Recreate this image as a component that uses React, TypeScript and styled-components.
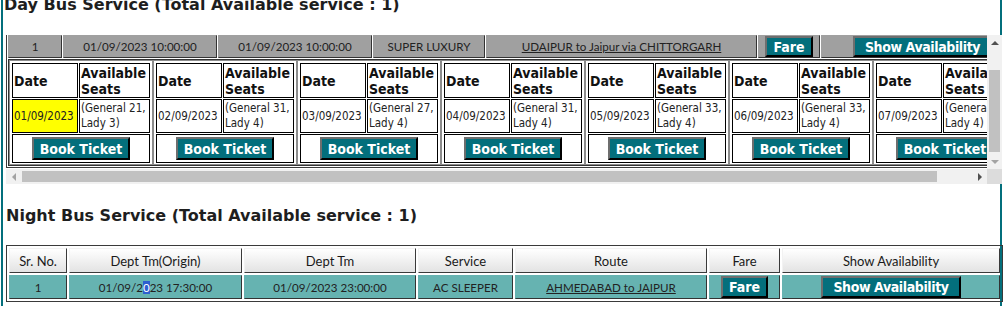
import React, { useLayoutEffect, useRef } from "react";
import styled, { createGlobalStyle, css } from "styled-components";

const teal = "#036f7c";
const bodyFont = `"Lato", "Liberation Sans", sans-serif`;
const boldFont = `"DejaVu Sans Condensed", "DejaVu Sans", Verdana, sans-serif`;

const GlobalStyle = createGlobalStyle`
  html, body {
    margin: 0;
    padding: 0;
    background: #fff;
    overflow: hidden;
  }
  body {
    font-family: ${bodyFont};
    color: #222;
  }
`;

const Page = styled.div`
  margin-left: 1px;
  width: 1001px;
  height: 311px;
  box-sizing: border-box;
  border-left: 2px solid ${teal};
  border-right: 2px solid ${teal};
  padding-left: 3px;
`;

const SectionTitle = styled.h2<{ $top: number; $shift?: number }>`
  margin: ${(p) => p.$top}px 0 0 ${(p) => p.$shift ?? 0}px;
  font: bold 16px/20px "DejaVu Sans", Verdana, sans-serif;
  color: #1e1e1e;
  white-space: nowrap;
`;

/* scroll area: viewport plus drawn classic scrollbars */
const ScrollFrame = styled.div`
  margin-top: 20px;
  width: 996px;
  height: 149px;
  display: grid;
  grid-template-columns: 981px 15px;
  grid-template-rows: 134px 15px;
`;

const Viewport = styled.div`
  overflow: hidden;
`;

const Track = styled.div<{ $vertical?: boolean }>`
  display: flex;
  flex-direction: ${(p) => (p.$vertical ? "column" : "row")};
  background: #f1f1f1;
`;

const TrackGutter = styled.div<{ $vertical?: boolean }>`
  flex: 1;
  display: flex;
  flex-direction: ${(p) => (p.$vertical ? "column" : "row")};
  padding: ${(p) => (p.$vertical ? "0 2px" : "2px 0")};
`;

const Thumb = styled.div<{ $start: number; $length: number; $vertical?: boolean }>`
  flex: none;
  background: #c1c1c1;
  ${(p) =>
    p.$vertical
      ? css`
          margin-top: ${p.$start}px;
          height: ${p.$length}px;
        `
      : css`
          margin-left: ${p.$start}px;
          width: ${p.$length}px;
        `}
`;

const Arrow = styled.div<{ $dir: "up" | "down" | "left" | "right"; $off?: boolean }>`
  flex: none;
  width: 15px;
  height: 15px;
  display: flex;
  align-items: center;
  justify-content: center;

  &::after {
    content: "";
    width: 0;
    height: 0;
    border: 4px solid transparent;
    ${(p) => {
      const c = p.$off ? "#a3a3a3" : "#505050";
      switch (p.$dir) {
        case "up":
          return css`
            border-top: 0;
            border-bottom: 4px solid ${c};
          `;
        case "down":
          return css`
            border-bottom: 0;
            border-top: 4px solid ${c};
          `;
        case "left":
          return css`
            border-left: 0;
            border-right: 4px solid ${c};
          `;
        default:
          return css`
            border-right: 0;
            border-left: 4px solid ${c};
          `;
      }
    }}
  }
`;

const Corner = styled.div`
  background: #dcdcdc;
`;

const Grid = styled.table<{ $width: number; $spacing: number; $top?: number; $after?: number }>`
  width: ${(p) => p.$width}px;
  table-layout: fixed;
  border-collapse: separate;
  border-spacing: ${(p) => p.$spacing}px;
  border: 1px solid #3a3a3a;
  margin: ${(p) => p.$top ?? 0}px 0 ${(p) => p.$after ?? 0}px;
  font-family: ${bodyFont};
  font-size: 11.6px;
  color: #222;
`;

const Col = styled.col<{ $w: number }>`
  width: ${(p) => p.$w}px;
`;

const HeadCell = styled.th<{ $h: number }>`
  height: ${(p) => p.$h}px;
  box-sizing: border-box;
  padding: 0 2px;
  font-weight: normal;
  font-size: 13px;
  color: #1a1a1a;
  text-align: center;
  white-space: nowrap;
  overflow: hidden;
  background: linear-gradient(#ffffff, #e3e3e3);
  border: 1px solid;
  border-color: #f2f2f2 #3a3a3a #3a3a3a #f2f2f2;
`;

const DataCell = styled.td<{ $tone: "gray" | "teal"; $h: number }>`
  height: ${(p) => p.$h}px;
  box-sizing: border-box;
  padding: 0 2px;
  text-align: center;
  white-space: nowrap;
  overflow: hidden;
  background: ${(p) => (p.$tone === "gray" ? "#a0a0a0" : "#66b3b1")};
  border: 1px solid;
  border-color: ${(p) => (p.$tone === "gray" ? "#a0a0a0" : "#66b3b1")} #333 #333
    ${(p) => (p.$tone === "gray" ? "#a0a0a0" : "#66b3b1")};
`;

const RouteLink = styled.a`
  color: #222;
  text-decoration: underline;
`;

const Selected = styled.span`
  background: #2f5fcf;
  color: #fff;
`;

const ActionButton = styled.button<{ $h: number; $tight?: boolean }>`
  height: ${(p) => p.$h}px;
  padding: 0 ${(p) => (p.$tight ? 10 : 6)}px;
  font-family: ${boldFont};
  font-weight: bold;
  font-size: 14px;
  line-height: 1;
  letter-spacing: ${(p) => (p.$tight ? "-0.4px" : "0")};
  color: #fff;
  background: ${teal};
  border: 2px solid;
  border-color: #6e6e6e #000 #000 #6e6e6e;
  white-space: nowrap;
  vertical-align: middle;
  cursor: pointer;
`;

const StripCell = styled.td`
  padding: 0;
  border: 1px solid #333;
  overflow: hidden;
`;

const DateStrip = styled.div`
  display: flex;
`;

const DayTable = styled.table`
  flex: none;
  width: 144px;
  table-layout: fixed;
  border-collapse: separate;
  border-spacing: 1px;
  border: 1px solid #8c8c8c;
  padding: 1px 1px 0;
  font-family: ${boldFont};
  color: #222;
`;

const DayHead = styled.th`
  height: 35px;
  box-sizing: border-box;
  padding: 0 1px;
  border: 1px solid #000;
  text-align: left;
  font-size: 14px;
  line-height: 16px;
  font-weight: bold;
  color: #111;
  white-space: nowrap;
  overflow: hidden;
`;

const DayValue = styled.td<{ $today?: boolean }>`
  height: 34px;
  box-sizing: border-box;
  padding: 0 1px;
  border: 1px solid #000;
  background: ${(p) => (p.$today ? "#ffff00" : "#fff")};
  font-size: 11.5px;
  line-height: 15px;
  white-space: nowrap;
  overflow: hidden;
`;

const BookCell = styled.td`
  height: 29px;
  box-sizing: border-box;
  padding: 0;
  border: 1px solid #000;
  text-align: center;
`;

const columns = ["Sr. No.", "Dept Tm(Origin)", "Dept Tm", "Service", "Route", "Fare", "Show Availability"];
const dayCols = [54, 154, 154, 112, 271, 62, 203];
const nightCols = [58, 173, 172, 95, 192, 71, 218];

const availability = [
  { date: "01/09/2023", general: 21, lady: 3, today: true },
  { date: "02/09/2023", general: 31, lady: 4 },
  { date: "03/09/2023", general: 27, lady: 4 },
  { date: "04/09/2023", general: 31, lady: 4 },
  { date: "05/09/2023", general: 33, lady: 4 },
  { date: "06/09/2023", general: 33, lady: 4 },
  { date: "07/09/2023", general: 33, lady: 4 },
];

function DayCard({ date, general, lady, today }: { date: string; general: number; lady: number; today?: boolean }) {
  return (
    <DayTable>
      <colgroup>
        <Col $w={66} />
        <Col $w={71} />
      </colgroup>
      <tbody>
        <tr>
          <DayHead>Date</DayHead>
          <DayHead>
            Available
            <br />
            Seats
          </DayHead>
        </tr>
        <tr>
          <DayValue $today={today}>{date}</DayValue>
          <DayValue>
            (General {general},
            <br />
            Lady {lady})
          </DayValue>
        </tr>
        <tr>
          <BookCell colSpan={2}>
            <ActionButton $h={23}>Book Ticket</ActionButton>
          </BookCell>
        </tr>
      </tbody>
    </DayTable>
  );
}

function HeaderRow({ h }: { h: number }) {
  return (
    <tr>
      {columns.map((c) => (
        <HeadCell key={c} $h={h}>
          {c}
        </HeadCell>
      ))}
    </tr>
  );
}

export default function App() {
  const viewRef = useRef<HTMLDivElement>(null);

  // the grid is shown scrolled to its bottom, header row out of view
  useLayoutEffect(() => {
    const el = viewRef.current;
    if (el) el.scrollTop = el.scrollHeight;
  }, []);

  return (
    <>
      <GlobalStyle />
      <Page>
        <SectionTitle $top={-5} $shift={-2}>
          Day Bus Service (Total Available service : 1)
        </SectionTitle>
        <ScrollFrame>
          <Viewport ref={viewRef}>
            <Grid $width={1020} $spacing={1} $after={1}>
              <colgroup>
                {dayCols.map((w, i) => (
                  <Col key={i} $w={w} />
                ))}
              </colgroup>
              <tbody>
                <HeaderRow h={26} />
                <tr>
                  <DataCell $tone="gray" $h={23}>1</DataCell>
                  <DataCell $tone="gray" $h={23}>01/09/2023 10:00:00</DataCell>
                  <DataCell $tone="gray" $h={23}>01/09/2023 10:00:00</DataCell>
                  <DataCell $tone="gray" $h={23}>SUPER LUXURY</DataCell>
                  <DataCell $tone="gray" $h={23}>
                    <RouteLink href="#">UDAIPUR to Jaipur via CHITTORGARH</RouteLink>
                  </DataCell>
                  <DataCell $tone="gray" $h={23}>
                    <ActionButton $h={21}>Fare</ActionButton>
                  </DataCell>
                  <DataCell $tone="gray" $h={23}>
                    <ActionButton $h={21} $tight>
                      Show Availability
                    </ActionButton>
                  </DataCell>
                </tr>
                <tr>
                  <StripCell colSpan={7}>
                    <DateStrip>
                      {availability.map((d) => (
                        <DayCard key={d.date} {...d} />
                      ))}
                    </DateStrip>
                  </StripCell>
                </tr>
              </tbody>
            </Grid>
          </Viewport>
          <Track $vertical>
            <Arrow $dir="up" />
            <TrackGutter $vertical>
              <Thumb $vertical $start={20} $length={82} />
            </TrackGutter>
            <Arrow $dir="down" $off />
          </Track>
          <Track>
            <Arrow $dir="left" $off />
            <TrackGutter>
              <Thumb $start={1} $length={915} />
            </TrackGutter>
            <Arrow $dir="right" />
          </Track>
          <Corner />
        </ScrollFrame>

        <SectionTitle $top={22}>Night Bus Service (Total Available service : 1)</SectionTitle>
        <Grid $width={997} $spacing={2} $top={19}>
          <colgroup>
            {nightCols.map((w, i) => (
              <Col key={i} $w={w} />
            ))}
          </colgroup>
          <tbody>
            <HeaderRow h={25} />
            <tr>
              <DataCell $tone="teal" $h={24}>1</DataCell>
              <DataCell $tone="teal" $h={24}>
                01/09/2<Selected>0</Selected>23 17:30:00
              </DataCell>
              <DataCell $tone="teal" $h={24}>01/09/2023 23:00:00</DataCell>
              <DataCell $tone="teal" $h={24}>AC SLEEPER</DataCell>
              <DataCell $tone="teal" $h={24}>
                <RouteLink href="#">AHMEDABAD to JAIPUR</RouteLink>
              </DataCell>
              <DataCell $tone="teal" $h={24}>
                <ActionButton $h={22}>Fare</ActionButton>
              </DataCell>
              <DataCell $tone="teal" $h={24}>
                <ActionButton $h={22} $tight>
                  Show Availability
                </ActionButton>
              </DataCell>
            </tr>
          </tbody>
        </Grid>
      </Page>
    </>
  );
}
